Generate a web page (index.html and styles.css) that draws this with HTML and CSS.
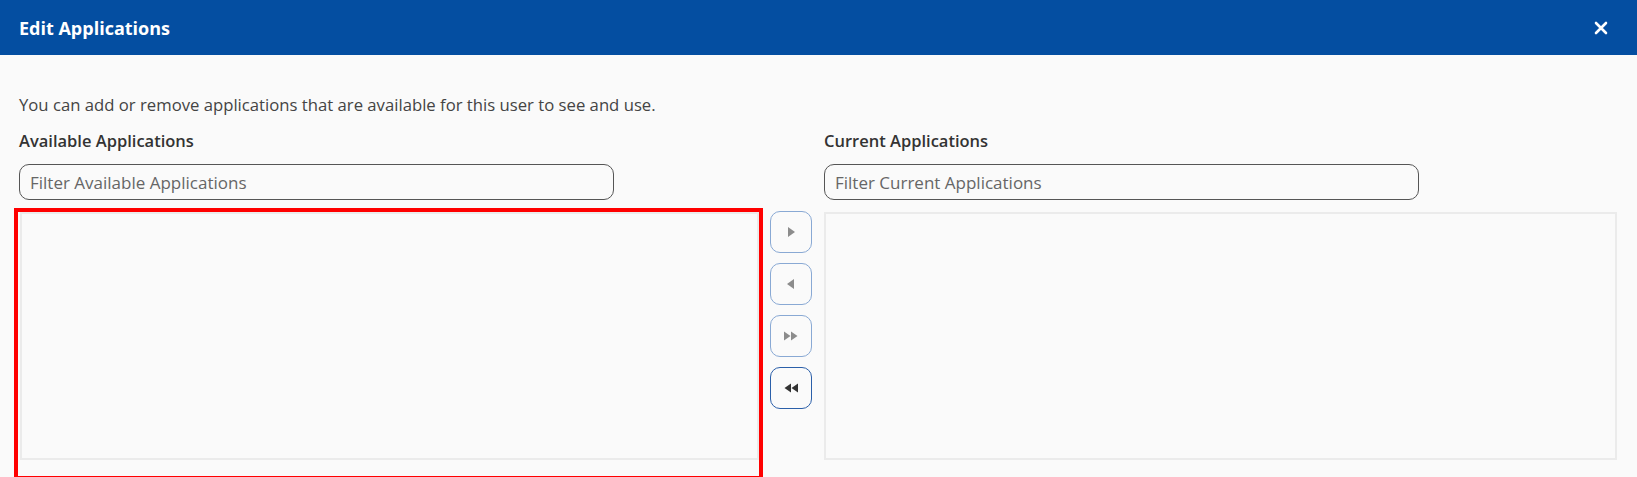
FILE: index.html
```html
<!DOCTYPE html>
<html lang="en">
<head>
  <meta charset="UTF-8">
  <meta name="viewport" content="width=device-width, initial-scale=1.0">
  <link rel="stylesheet" href="styles.css">
  <title>Edit Applications</title>
</head>
<body>
<div class="modal">
  <div class="modalHeader">
    <h1>Edit Applications</h1>
    <button class="closeBtn" aria-label="Close">
      <svg width="14" height="14" viewBox="0 0 14 14">
        <path d="M2 2 L12 12 M12 2 L2 12" stroke="#fff" stroke-width="2.6" stroke-linecap="round" />
      </svg>
    </button>
  </div>

  <div class="modalBody">
    <p class="intro">You can add or remove applications that are available for this user to see and use.</p>

    <div class="pickGrid">
      <div class="colLabel leftCol">Available Applications</div>
      <div></div>
      <div class="colLabel">Current Applications</div>

      <div class="leftCol">
        <input type="text" class="filter" placeholder="Filter Available Applications" />
      </div>
      <div></div>
      <div>
        <input type="text" class="filter" placeholder="Filter Current Applications" />
      </div>

      <div class="flagged">
        <div class="appList"></div>
      </div>
      <div class="moveButtons">
        <button class="moveBtn">
          <svg width="12" height="12" viewBox="0 0 12 12"><path d="M3 1 L10 6 L3 11 Z" fill="#8c8c8c" /></svg>
        </button>
        <button class="moveBtn">
          <svg width="12" height="12" viewBox="0 0 12 12"><path d="M9 1 L2 6 L9 11 Z" fill="#8c8c8c" /></svg>
        </button>
        <button class="moveBtn">
          <svg width="16" height="12" viewBox="0 0 16 12"><path d="M1 1.5 L7.5 6 L1 10.5 Z M8 1.5 L14.5 6 L8 10.5 Z" fill="#8c8c8c" /></svg>
        </button>
        <button class="moveBtn active">
          <svg width="16" height="12" viewBox="0 0 16 12"><path d="M15 1.5 L8.5 6 L15 10.5 Z M8 1.5 L1.5 6 L8 10.5 Z" fill="#333" /></svg>
        </button>
      </div>
      <div class="appList rightList"></div>
    </div>
  </div>
</div>
</body>
</html>
```

FILE: styles.css
```css
body {
  margin: 0;
  background-color: #fafafa;
  font-family: "Open Sans", "Noto Sans", sans-serif;
  color: #333;
  overflow: hidden;
}

.modalHeader {
  height: 55px;
  background-color: #044ea1;
  display: flex;
  align-items: center;
  justify-content: space-between;
  padding: 0 29px 0 19px;
}

.modalHeader h1 {
  margin: 0;
  font-size: 18px;
  font-weight: bold;
  color: #fff;
}

.closeBtn {
  border: none;
  background: none;
  padding: 0;
  display: flex;
  cursor: pointer;
}

.modalBody {
  padding: 38px 20px 0 14px;
}

.intro {
  margin: 0 0 12px 5px;
  font-size: 16.7px;
  line-height: 24px;
  color: #444;
}

/* label row, filter row, list row */
.pickGrid {
  display: grid;
  grid-template-columns: 749px 42px 1fr;
  column-gap: 7px;
}

.pickGrid > :nth-child(3n) {
  margin-left: 5px;
}

.leftCol {
  padding-left: 5px;
}

.colLabel {
  font-size: 16.5px;
  font-weight: 600;
  line-height: 24px;
  margin-bottom: 11px;
  color: #333;
}

.filter {
  box-sizing: border-box;
  width: 595px;
  height: 36px;
  border: 1px solid #555;
  border-radius: 10px;
  background: #fafafa;
  padding: 0 10px;
  font-family: inherit;
  font-size: 17px;
  color: #333;
  margin-bottom: 8px;
}

.filter::placeholder {
  color: #666;
}

.flagged {
  border: 4px solid #f00;
  padding: 0 0 16px 2px;
}

.appList {
  box-sizing: border-box;
  height: 248px;
  border: 2px solid #ebebeb;
  background-color: #fafafa;
}

.rightList {
  margin-top: 4px;
}

.moveButtons {
  display: flex;
  flex-direction: column;
  gap: 10px;
  padding-top: 3px;
}

.moveBtn {
  width: 42px;
  height: 42px;
  border: 1px solid #89a9d4;
  border-radius: 10px;
  background: #fafafa;
  display: flex;
  align-items: center;
  justify-content: center;
  padding: 0;
  cursor: pointer;
}

.moveBtn.active {
  border-color: #2b5fa9;
}
```
